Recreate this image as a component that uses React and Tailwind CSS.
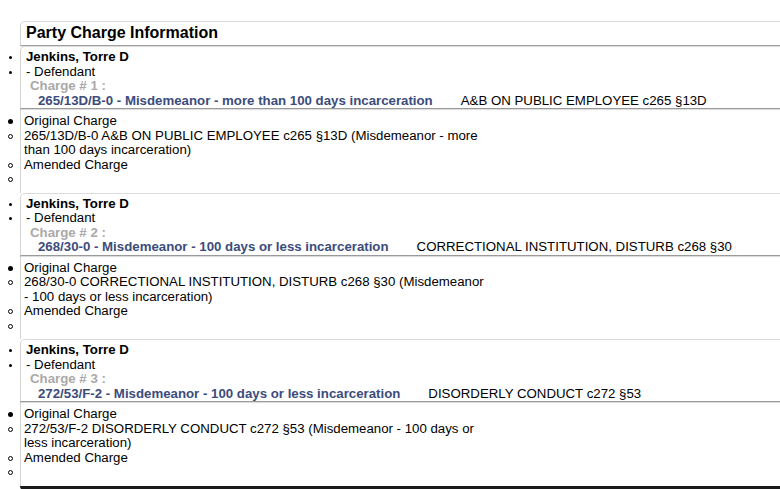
import React from "react";

// Data for each charge row
const charges = [
  {
    num: 1,
    code: "265/13D/B-0 - Misdemeanor - more than 100 days incarceration",
    desc: "A&B ON PUBLIC EMPLOYEE c265 §13D",
    original:
      "265/13D/B-0 A&B ON PUBLIC EMPLOYEE c265 §13D (Misdemeanor - more than 100 days incarceration)",
  },
  {
    num: 2,
    code: "268/30-0 - Misdemeanor - 100 days or less incarceration",
    desc: "CORRECTIONAL INSTITUTION, DISTURB c268 §30",
    original:
      "268/30-0 CORRECTIONAL INSTITUTION, DISTURB c268 §30 (Misdemeanor - 100 days or less incarceration)",
  },
  {
    num: 3,
    code: "272/53/F-2 - Misdemeanor - 100 days or less incarceration",
    desc: "DISORDERLY CONDUCT c272 §53",
    original:
      "272/53/F-2 DISORDERLY CONDUCT c272 §53 (Misdemeanor - 100 days or less incarceration)",
  },
];

const Bullet = ({ type }) => {
  if (type === "dot") {
    return <span className="block w-[3px] h-[3px] rounded-full bg-black mt-[6px]" />;
  }
  if (type === "disc") {
    return <span className="block w-[5px] h-[5px] rounded-full bg-black mt-[5px]" />;
  }
  return <span className="block w-[5px] h-[5px] rounded-full border border-black mt-[5px]" />;
};

// Row with a hanging bullet sitting outside the panel's left border
const Row = ({ type, children, pad = "pl-[5px]" }) => (
  <div className="flex -ml-[21px]">
    <div className="w-[21px] shrink-0 flex justify-center">
      {type && <Bullet type={type} />}
    </div>
    <div className={pad}>{children}</div>
  </div>
);

const ChargeGroup = ({ charge }) => (
  <>
    {/* Charge header box */}
    <div className="border-l border-t border-b border-l-[#d4d4d4] border-t-[#dcdcdc] border-b-[#9a9a9a] rounded-tl-[5px] pt-[3px] shadow-[0_1px_1px_rgba(0,0,0,0.15)] relative">
      <Row type="dot">
        <span className="font-bold">Jenkins, Torre D</span>
      </Row>
      <Row type="dot">- Defendant</Row>
      <div className="pl-[9px] font-bold text-[#a9a9a9]">Charge # {charge.num} :</div>
      <div className="pl-[17px] flex">
        <span className="font-bold text-[#3c4c7c]">{charge.code}</span>
        <span className="ml-[28px]">{charge.desc}</span>
      </div>
    </div>

    {/* Original / amended charge list */}
    <div className="border-l border-[#d4d4d4] pt-[5px] pb-[6px]">
      <Row type="disc" pad="pl-[3px]">
        Original Charge
      </Row>
      <Row type="circle" pad="pl-[3px] w-[466px]">
        {charge.original}
      </Row>
      <Row type="circle" pad="pl-[3px]">
        Amended Charge
      </Row>
      <Row type="circle" pad="pl-[3px]">
        &nbsp;
      </Row>
    </div>
  </>
);

export default function App() {
  return (
    <div className="bg-white h-[489px] overflow-hidden pt-[21px] pl-[20px] text-[13.25px] leading-[14.5px] text-black font-['Liberation_Sans','Helvetica',sans-serif]">
      <div className="w-[800px] rounded-bl-[4px] border-b-[4px] border-[#1a1a1a]">
        {/* Panel title */}
        <div className="border-l border-t border-b border-l-[#d4d4d4] border-t-[#d8d8d8] border-b-[#a0a0a0] rounded-tl-[5px] pl-[5px] pt-[2px] pb-[3px] shadow-[0_1px_1px_rgba(0,0,0,0.12)] relative">
          <h2 className="text-[16px] leading-[18px] font-bold">Party Charge Information</h2>
        </div>
        {charges.map((c) => (
          <ChargeGroup key={c.num} charge={c} />
        ))}
      </div>
    </div>
  );
}
